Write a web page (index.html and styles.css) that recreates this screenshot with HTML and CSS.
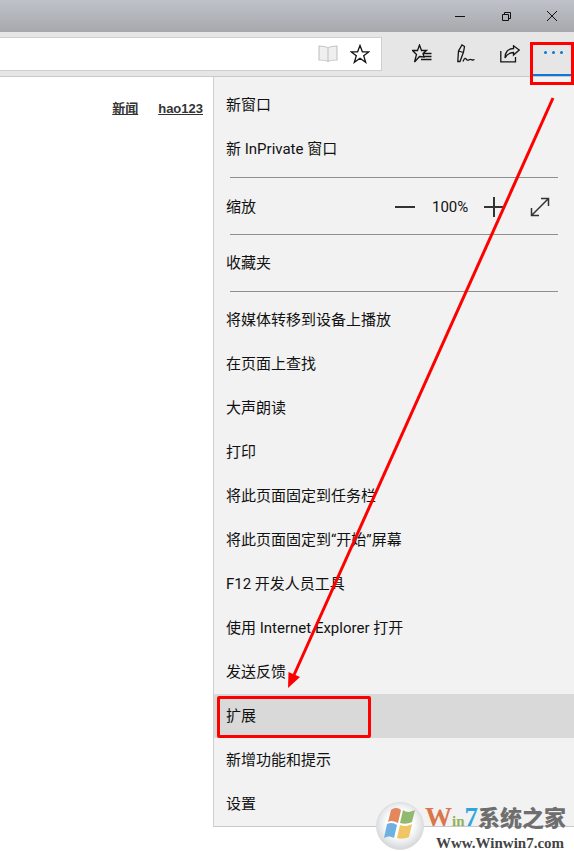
FILE: index.html
```html
<!DOCTYPE html>
<html lang="zh-CN">
<head>
<meta charset="utf-8">
<title>Edge 菜单</title>
<link rel="stylesheet" href="styles.css">
</head>
<body>
<div class="window">
  <header class="titlebar">
    <svg class="caption" width="14" height="14" viewBox="0 0 14 14"><path d="M2 7.500H12" /></svg>
    <svg class="caption" width="14" height="14" viewBox="0 0 14 14"><path d="M3.500 5.500H9.500V11.500H3.500ZM5.500 5.500V3.500H11.500V9.500H9.500" /></svg>
    <svg class="caption" width="14" height="14" viewBox="0 0 14 14"><path d="M2 2L12 12M12 2L2 12" /></svg>
  </header>
  <div class="toolbar">
    <div class="address">
      <svg class="addr-icon" width="20" height="18" viewBox="0 0 20 18"><path class="faint" d="M10 3C8 1.500 4 1 1 1V15C4 15 8 15 10 16.500C12 15 16 15 19 15V1C16 1 12 1.500 10 3ZM10 3V16.500" /></svg>
      <svg class="addr-icon" width="20" height="20" viewBox="0 0 20 20"><path class="dark" d="M10 1.500L12.400 7.800H19L13.700 11.700L15.700 18.300L10 14.300L4.300 18.300L6.300 11.700L1 7.800H7.600Z" /></svg>
    </div>
    <div class="tools">
      <svg class="tool" width="20" height="20" viewBox="0 0 20 20"><path class="dark" d="M7.500 1L9.500 6.500H14.500L11 9.500L12 13L7.500 12.500L2.500 18L4.500 10.500L0.500 6.500H5.500ZM11.500 9.500H19.500M11.500 12.500H19.500M9 15.500H19.500" /></svg>
      <svg class="tool" width="18" height="19" viewBox="0 0 18 19"><path class="dark" d="M0.800 17.500L1.500 7L5 1L7.500 2.500L6.500 8L3 17.500ZM1.500 7L6.500 8.500M6 17.500C8 12 9 15 10 16C12 17 12.500 14.500 14 15.500C15 16.200 16.500 16 17.500 15.500" /></svg>
      <svg class="tool" width="20" height="18" viewBox="0 0 20 18"><path class="dark" d="M0.800 6V16.800H15.500V12M0.800 16.800H15.500M19.200 5L13.500 0.800V3.500C8 3.500 5 7 5 13C7 9 10 7.500 13.500 7.500V10Z" /></svg>
      <div class="more">
        <span class="dot"></span><span class="dot"></span><span class="dot"></span>
      </div>
    </div>
  </div>
  <div class="content">
    <main class="page">
      <nav class="links">
        <a class="link" href="#">新闻</a>
        <a class="link" href="#">hao123</a>
      </nav>
    </main>
    <aside class="menu">
      <div class="item">新窗口</div>
      <div class="item">新 InPrivate 窗口</div>
      <hr class="sep sep-a">
      <div class="item zoom-row">
        <span>缩放</span>
        <span class="zoom-controls">
          <svg class="zoom-icon" width="20" height="20" viewBox="0 0 20 20"><path class="thick" d="M0 10H20" /></svg>
          <span class="pct">100%</span>
          <svg class="zoom-icon" width="20" height="20" viewBox="0 0 20 20"><path class="thick" d="M0 10H20M10 0V20" /></svg>
          <svg class="zoom-full" width="20" height="20" viewBox="0 0 20 20"><path class="full" d="M1.500 18.500L18.500 1.500M11 1.500H18.500V9M1.500 11V18.500H9" /></svg>
        </span>
      </div>
      <hr class="sep sep-b">
      <div class="item">收藏夹</div>
      <hr class="sep sep-c">
      <div class="item">将媒体转移到设备上播放</div>
      <div class="item">在页面上查找</div>
      <div class="item">大声朗读</div>
      <div class="item">打印</div>
      <div class="item">将此页面固定到任务栏</div>
      <div class="item">将此页面固定到“开始”屏幕</div>
      <div class="item">F12 开发人员工具</div>
      <div class="item">使用 Internet Explorer 打开</div>
      <div class="item">发送反馈</div>
      <div class="item active">扩展</div>
      <div class="item">新增功能和提示</div>
      <div class="item">设置</div>
    </aside>
  </div>
</div>

<div class="mark-more"></div>
<div class="mark-ext"></div>
<svg class="arrow" width="574" height="851" viewBox="0 0 574 851">
  <path class="arrow-line" d="M553 98L294 675" />
  <path class="arrow-head" d="M288 688L288.500 672L300 677Z" />
</svg>

<div class="logo">
  <svg class="orb" width="48" height="48" viewBox="0 0 48 48">
    <defs>
      <radialGradient id="orbfill" cx="0.500" cy="0.450" r="0.550">
        <stop offset="0.500" stop-color="#ffffff"/>
        <stop offset="1" stop-color="#d3d6d9"/>
      </radialGradient>
    </defs>
    <circle cx="24" cy="24" r="23.500" fill="url(#orbfill)" stroke="#dcdfe2"/>
    <path d="M12 20L15 8C19 5 23 6 25 8L22 21C18 19 15 18 12 20Z" fill="#e2885c"/>
    <path d="M27 8C31 11 35 10 39 8L36 20C32 22 28 22 24 21Z" fill="#93b870"/>
    <path d="M11 22C15 20 18 21 21 23L18 36C14 34 11 34 8 36Z" fill="#6fb0e2"/>
    <path d="M24 23C28 25 32 24 36 22L33 35C29 37 24 37 21 36Z" fill="#f0c565"/>
  </svg>
  <div class="logo-text">
    <div class="logo-title"><span class="w">W</span><span class="in">in</span><span class="seven">7</span><span class="cn">系统之家</span></div>
    <div class="logo-url">Www.Winwin7.com</div>
  </div>
</div>
</body>
</html>
```

FILE: styles.css
```css
* { box-sizing: border-box; }
html, body { margin: 0; padding: 0; }
body {
  width: 574px;
  height: 851px;
  overflow: hidden;
  position: relative;
  background: #fff;
  font-family: Roboto, "Noto Sans CJK SC", sans-serif;
  color: #1a1a1a;
}
.window { display: flex; flex-direction: column; height: 851px; }

.titlebar {
  height: 32px;
  flex: none;
  background: linear-gradient(#bfc2c9, #a6a8ac);
  display: flex;
  justify-content: flex-end;
  align-items: center;
  gap: 32px;
  padding: 0 15px 0 0;
}
.caption { fill: none; stroke: #111; stroke-width: 1; display: block; }

.toolbar {
  height: 45px;
  flex: none;
  background: #e6e6e7;
  border-bottom: 1px solid #c9c9c9;
  display: flex;
  align-items: flex-start;
  padding-top: 5px;
}
.address {
  width: 382px;
  height: 34px;
  flex: none;
  background: #fff;
  border: 1px solid #cfcfcf;
  border-left: 0;
  display: flex;
  justify-content: flex-end;
  align-items: center;
  gap: 12px;
  padding-right: 11px;
}
.addr-icon { display: block; }
.faint { fill: #efefef; stroke: #c6c6c6; stroke-width: 1.200; }
.dark { fill: none; stroke: #151515; stroke-width: 1.300; }

.tools {
  flex: 1;
  display: flex;
  align-items: center;
  height: 33px;
  padding-left: 30px;
  position: relative;
}
.tool { display: block; flex: none; }
.tool:nth-child(1) { margin-right: 25px; }
.tool:nth-child(2) { margin-right: 25px; }
.more {
  position: absolute;
  right: 0;
  top: -5px;
  width: 41px;
  height: 44px;
  border-bottom: 2px solid #0a78d4;
  display: flex;
  justify-content: center;
  align-items: center;
  gap: 5px;
  padding-bottom: 2px;
  padding-right: 1px;
}
.dot { width: 3px; height: 3px; border-radius: 50%; background: #0a78d4; }

.content { flex: 1; display: flex; min-height: 0; }
.page { width: 213px; flex: none; padding: 24px 10px 0 0; }
.links { display: flex; justify-content: flex-end; gap: 20px; }
.link {
  font-family: "Liberation Sans", "Noto Sans CJK SC", sans-serif;
  font-size: 13px;
  font-weight: 700;
  line-height: 15px;
  color: #333;
  text-decoration: underline;
}

.menu {
  width: 361px;
  flex: none;
  height: 750px;
  background: #f2f2f2;
  border-left: 1px solid #cfcfcf;
  border-bottom: 1px solid #c9c9c9;
  padding-top: 6px;
}
.item {
  height: 44px;
  padding-left: 12px;
  padding-bottom: 3px;
  display: flex;
  align-items: center;
  font-size: 15px;
  color: #111;
  white-space: nowrap;
}
.item.active { background: #d9d9d9; }
.sep {
  height: 1px;
  margin-left: 16px;
  margin-right: 16px;
  border: 0;
  background: #8f8f8f;
}
.sep-a { margin-top: 6px; margin-bottom: 7px; }
.sep-b { margin-top: 5px; margin-bottom: 6px; }
.sep-c { margin-top: 6px; margin-bottom: 6px; }
.zoom-row { justify-content: space-between; padding-right: 24px; }
.zoom-controls { display: flex; align-items: center; padding-top: 3px; }
.pct { font-size: 15px; width: 36px; margin: 0 16px 0 17px; text-align: center; }
.zoom-icon { display: block; }
.zoom-full { display: block; margin-left: 26px; }
.thick { fill: none; stroke: #333; stroke-width: 2; }
.full { fill: none; stroke: #333; stroke-width: 1.500; }

.mark-more {
  position: absolute;
  left: 530px;
  top: 42px;
  width: 44px;
  height: 43px;
  border: 3px solid #f00;
}
.mark-ext {
  position: absolute;
  left: 217px;
  top: 696px;
  width: 154px;
  height: 42px;
  border: 3px solid #f00;
  border-radius: 2px;
}
.arrow { position: absolute; left: 0; top: 0; pointer-events: none; }
.arrow-line { stroke: #f00; stroke-width: 3; fill: none; }
.arrow-head { fill: #f00; }

.logo {
  position: absolute;
  left: 376px;
  top: 802px;
  display: flex;
  align-items: flex-start;
  gap: 1px;
}
.orb { display: block; flex: none; }
.logo-title {
  font-family: "Liberation Serif", "Noto Sans CJK SC", serif;
  font-weight: 700;
  line-height: 24px;
  margin-top: 2px;
  white-space: nowrap;
}
.w { color: #d9764a; font-size: 27px; }
.in { color: #8fb35a; font-size: 15px; }
.seven { color: #2fa6dd; font-size: 27px; }
.cn { color: #6e6e6e; font-family: "Noto Sans CJK SC", sans-serif; font-size: 22px; font-weight: 900; }
.logo-url {
  font-family: "Liberation Serif", serif;
  font-size: 15px;
  font-weight: 700;
  line-height: 15px;
  color: #444;
  margin-left: 11px;
  margin-top: 3px;
  white-space: nowrap;
}
```
